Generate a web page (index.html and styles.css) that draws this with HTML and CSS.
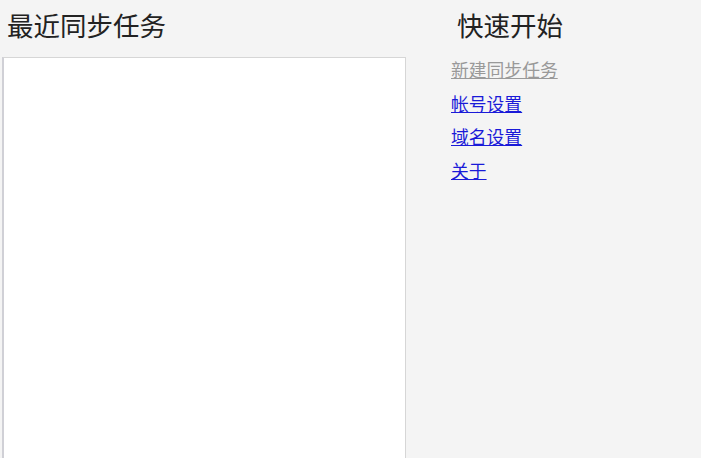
FILE: index.html
```html
<!DOCTYPE html>
<html lang="zh-CN">
<head>
    <meta charset="UTF-8">
    <title>同步</title>
    <link rel="stylesheet" href="styles.css">
</head>
<body>
    <div class="page">
        <div class="recent">
            <h2 class="title">最近同步任务</h2>
            <div class="task-list"></div>
        </div>
        <div class="quick">
            <h2 class="title quick-title">快速开始</h2>
            <ul class="links">
                <li><a class="disabled">新建同步任务</a></li>
                <li><a href="#">帐号设置</a></li>
                <li><a href="#">域名设置</a></li>
                <li><a href="#">关于</a></li>
            </ul>
        </div>
    </div>
</body>
</html>
```

FILE: styles.css
```css
* {
    margin: 0;
    padding: 0;
    box-sizing: border-box;
}

html, body {
    height: 100%;
    overflow: hidden;
}

body {
    font-family: "Noto Sans CJK SC", "DejaVu Sans", sans-serif;
    background: #f4f4f4;
}

.page {
    display: flex;
    gap: 45px;
}

.recent {
    width: 406px;
    padding-left: 2px;
}

.title {
    font-size: 26.5px;
    font-weight: normal;
    color: #222;
    line-height: 30px;
    height: 57px;
    padding: 10px 0 0 5px;
}

.task-list {
    background: #fff;
    border: 1px solid #d6d6d6;
    border-left: 2px solid #d0d0d6;
    height: 420px;
}

.quick-title {
    padding-left: 6px;
    height: 53px;
}

.links {
    list-style: none;
}

.links li {
    height: 33.5px;
    line-height: 33.5px;
    font-size: 17.8px;
}

.links a {
    color: #1a1ad8;
    text-decoration: underline;
}

.links a.disabled {
    color: #999;
}
```
